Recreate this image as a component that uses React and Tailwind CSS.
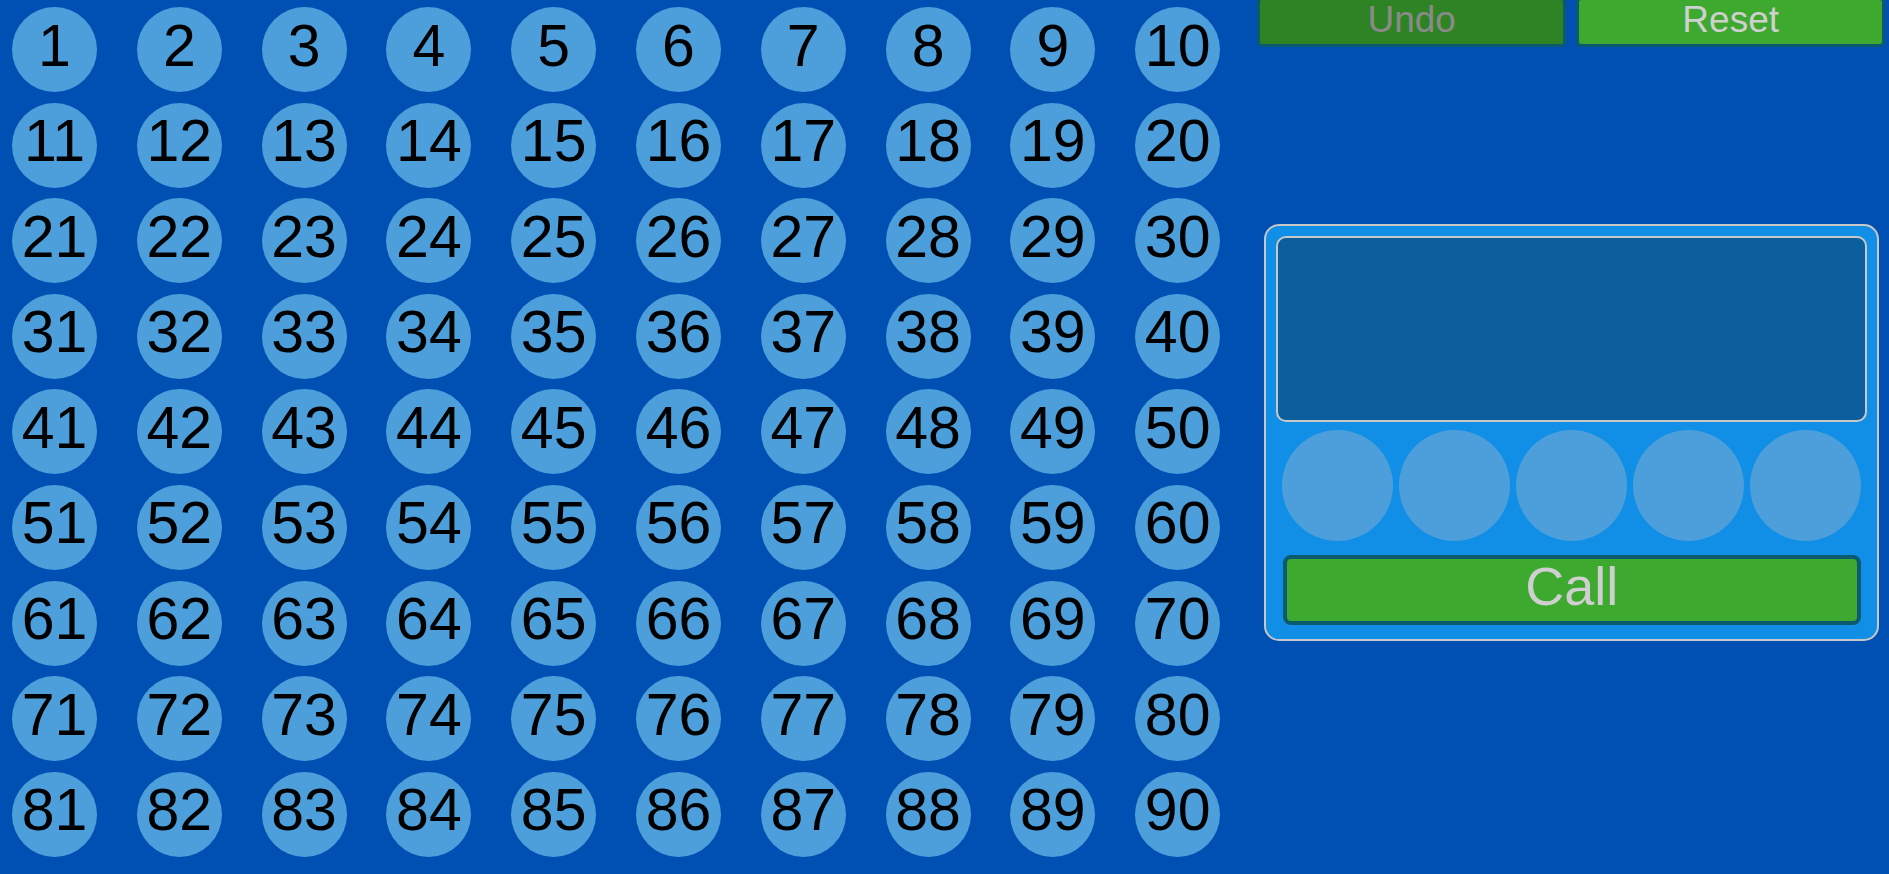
import React from "react";

const numbers = Array.from({ length: 90 }, (_, i) => i + 1);
const slots = [0, 1, 2, 3, 4];

const NumberBall = ({ value }) => (
  <div className="flex h-[85px] w-[85px] items-center justify-center rounded-full bg-[#4c9fdb] pb-[7px] text-[59px] leading-none text-black">
    {value}
  </div>
);

export default function App() {
  return (
    <div
      className="flex h-screen w-full overflow-hidden bg-[#0050b4]"
      style={{ fontFamily: '"Liberation Sans", Arial, sans-serif' }}
    >
      <div className="grid grid-cols-[repeat(10,85px)] content-start gap-x-[39.8px] gap-y-[10.6px] pl-[12px] pt-[7px]">
        {numbers.map((n) => (
          <NumberBall key={n} value={n} />
        ))}
      </div>

      <div className="ml-[37px] flex w-[628px] flex-col">
        <div className="-mt-[3px] flex gap-[10px]">
          <button
            type="button"
            className="flex h-[50px] flex-1 items-center justify-center rounded-[5px] border-[3px] border-[#0b5a6e] bg-[#2e8424] pb-[6px] text-[37px] leading-none text-[#8a8a8a]"
          >
            Undo
          </button>
          <button
            type="button"
            className="flex h-[50px] flex-1 items-center justify-center rounded-[5px] border-[3px] border-[#0b5a6e] bg-[#3da92f] pb-[6px] text-[37px] leading-none text-[#cfcfcf]"
          >
            Reset
          </button>
        </div>

        <div className="ml-[7px] mt-[177px] box-border flex h-[417px] w-[615px] flex-col rounded-[15px] border-2 border-[#c8c8c8] bg-[#118fe6] p-[10px]">
          <div className="h-[186px] w-full rounded-[10px] border-2 border-[#c8c8c8] bg-[#0b5f9c]" />

          <div className="mt-[8px] flex justify-center gap-[6px]">
            {slots.map((s) => (
              <div key={s} className="h-[111px] w-[111px] rounded-full bg-[#4c9fdb]" />
            ))}
          </div>

          <button
            type="button"
            className="mx-auto mt-[14px] flex h-[70px] w-[578px] items-center justify-center rounded-[8px] border-4 border-[#0b5a6e] bg-[#3da92f] pb-[8px] text-[54px] leading-none text-[#cfcfcf]"
          >
            Call
          </button>
        </div>
      </div>
    </div>
  );
}
